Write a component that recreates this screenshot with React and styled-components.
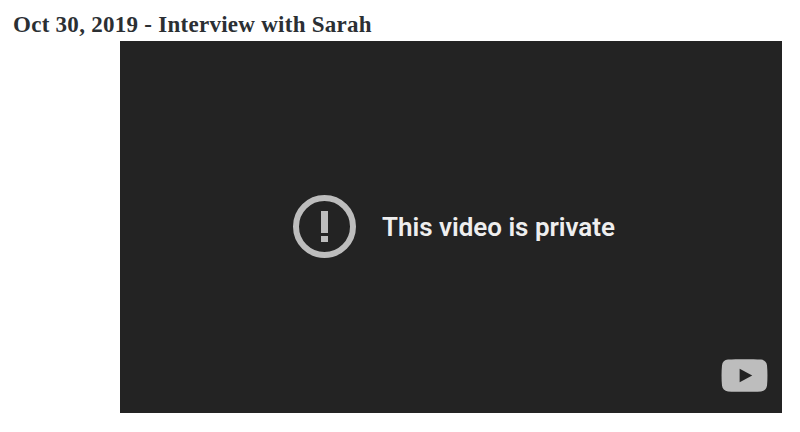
import React from "react"
import styled, { createGlobalStyle } from "styled-components"

const GlobalStyle = createGlobalStyle`
  html, body {
    margin: 0;
    padding: 0;
    background: #fff;
  }
`

const Page = styled.div`
  width: 800px;
  height: 432px;
  overflow: hidden;
  padding: 12px 18px 0 13px;
  box-sizing: border-box;
`

const Title = styled.h2`
  margin: 0 0 3px;
  height: 26px;
  font-family: "Liberation Serif", serif;
  font-size: 23px;
  line-height: 26px;
  font-weight: 700;
  letter-spacing: 0.27px;
  color: #2b2f33;
`

const Player = styled.div`
  position: relative;
  margin-left: 107px;
  width: 662px;
  height: 372px;
  background: #232323;
  display: flex;
  align-items: center;
  justify-content: center;
  padding-left: 6px;
  box-sizing: border-box;
`

const Message = styled.div`
  display: flex;
  align-items: center;
  gap: 25px;
`

const Label = styled.span`
  font-family: Roboto, sans-serif;
  font-size: 26px;
  font-weight: 600;
  letter-spacing: -0.03px;
  color: #eeeeee;
`

const Logo = styled.svg`
  position: absolute;
  right: 14px;
  bottom: 21px;
  width: 47px;
  height: 33px;
`

const AlertIcon = () => (
  <svg width="64" height="64" viewBox="0 0 64 64">
    <circle cx="31.500" cy="31.500" r="28.500" fill="none" stroke="#bdbdbd" strokeWidth="6" />
    <rect x="28" y="16" width="7" height="22" fill="#bdbdbd" />
    <rect x="28" y="41" width="7" height="6" fill="#bdbdbd" />
  </svg>
)

const App = () => (
  <Page>
    <GlobalStyle />
    <Title>Oct 30, 2019 - Interview with Sarah</Title>
    <Player>
      <Message>
        <AlertIcon />
        <Label>This video is private</Label>
      </Message>
      <Logo viewBox="0.500 0 47 34">
        <path
          d="M7 .6C16 0 32 0 41 .6c3.600.3 5.800 2.600 6.200 6 .6 6.500.6 14.300 0 20.800-.4 3.400-2.600 5.700-6.200 6C32 34 16 34 7 33.400c-3.600-.3-5.800-2.600-6.200-6-.6-6.500-.6-14.300 0-20.800.4-3.400 2.600-5.700 6.200-6z"
          fill="#bdbdbd"
        />
        <path d="M19 10l13 7-13 7z" fill="#232323" />
      </Logo>
    </Player>
  </Page>
)

export default App
